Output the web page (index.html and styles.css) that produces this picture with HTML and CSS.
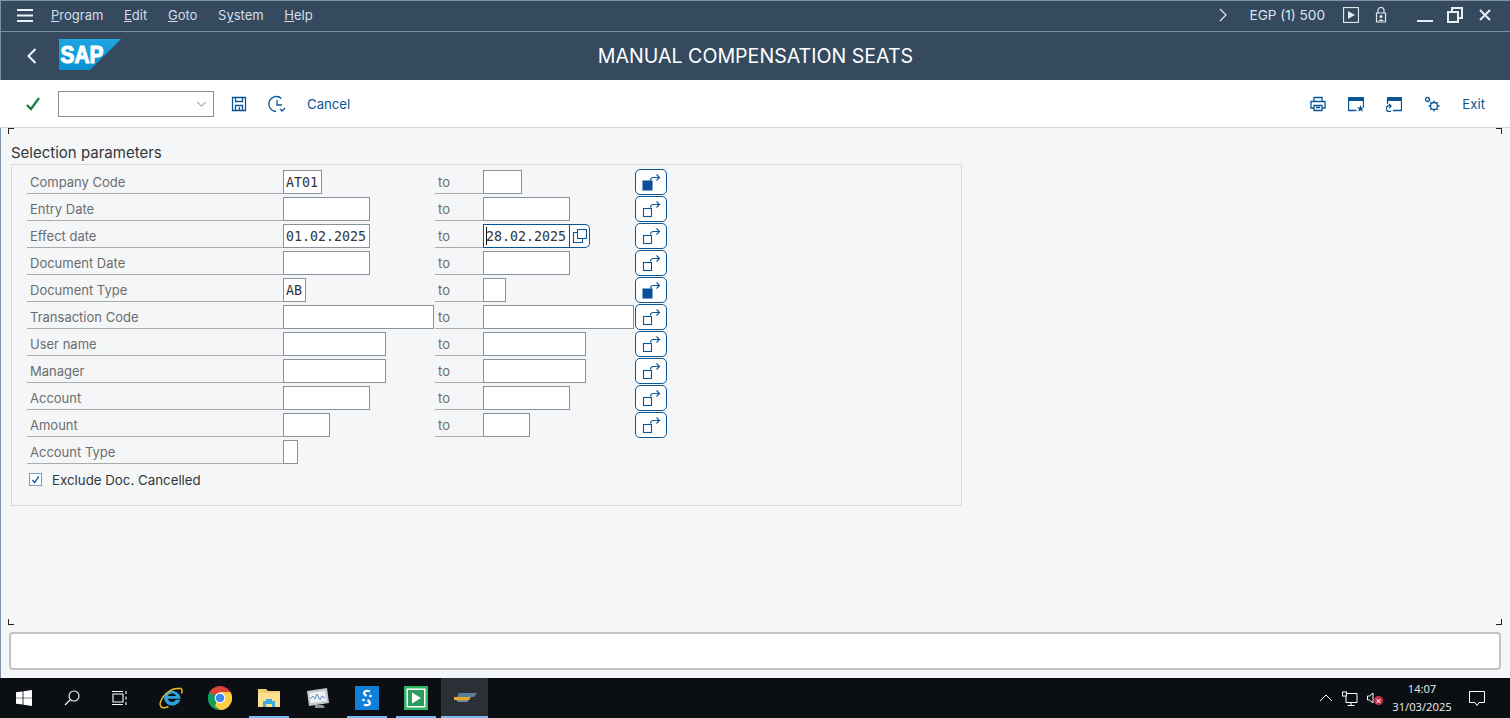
FILE: index.html
```html
<!DOCTYPE html>
<html lang="en">
<head>
<meta charset="utf-8">
<title>Manual Compensation Seats</title>
<link rel="stylesheet" href="styles.css">
</head>
<body>
<div class="window">
  <header class="shell">
    <div class="menubar">
      <svg class="ico hamburger" viewBox="0 0 16 13"><path d="M0 1h16M0 6.500h16M0 12h16"/></svg>
      <nav class="menus">
        <span><u>P</u>rogram</span><span><u>E</u>dit</span><span><u>G</u>oto</span><span>S<u>y</u>stem</span><span><u>H</u>elp</span>
      </nav>
      <div class="sysinfo">
        <svg class="ico chev" viewBox="0 0 8 14"><path d="M1 1l6 6-6 6"/></svg>
        <span class="sysname">EGP (1) 500</span>
        <svg class="ico play" viewBox="0 0 16 16"><rect x="0.500" y="0.500" width="15" height="15"/><path class="fill" d="M5 4l7 4-7 4z"/></svg>
        <svg class="ico lock" viewBox="0 0 12 16"><path d="M3 6V3.500a3 3 0 0 1 6 0V6M1.500 6h9v9h-9z"/><circle class="fill" cx="6" cy="9.500" r="1.500"/><path class="fill" d="M3.500 14c0-2 5-2 5 0z"/></svg>
        <div class="winbtns">
          <svg class="ico" viewBox="0 0 16 16"><path class="thick" d="M0 14h16"/></svg>
          <svg class="ico" viewBox="0 0 16 16"><path class="thick" d="M1 5h10v10H1zM5 5V1h10v10h-4"/></svg>
          <svg class="ico" viewBox="0 0 16 16"><path class="thick" d="M3 3l10 10M13 3L3 13"/></svg>
        </div>
      </div>
    </div>
    <div class="titlebar">
      <div class="title-left">
        <svg class="ico back" viewBox="0 0 10 16"><path d="M8.500 1L1.500 8l7 7"/></svg>
        <svg class="logo" viewBox="0 0 62 31">
          <defs><linearGradient id="sapg" x1="0" y1="0" x2="0" y2="1"><stop offset="0" stop-color="#1ea7e2"/><stop offset="1" stop-color="#0a8fd4"/></linearGradient></defs>
          <path d="M0 0h62L31 31H0z" fill="url(#sapg)"/>
          <text x="1.500" y="24" class="logotext" textLength="43" lengthAdjust="spacingAndGlyphs">SAP</text>
        </svg>
      </div>
      <h1 class="title">MANUAL COMPENSATION SEATS</h1>
      <div></div>
    </div>
  </header>

  <div class="toolbar">
    <svg class="tb-check" viewBox="0 0 14 14"><path d="M1 8l4 4 8-11"/></svg>
    <div class="cmd">
      <svg class="cmd-arrow" viewBox="0 0 12 7"><path d="M1 1l5 5 5-5"/></svg>
    </div>
    <svg class="tbi save" viewBox="0 0 16 16"><path d="M1.500 1.500h13v13h-13zM4.500 1.500v4h7v-4M4.500 14.500v-5h7v5M8.500 11v3"/></svg>
    <svg class="tbi hist" viewBox="0 0 18 18"><path d="M13.500 3.500A7.500 7.500 0 1 0 8 16.500M9 5v5h5M12 14l2 2 3-3"/></svg>
    <span class="tb-text cancel">Cancel</span>
    <div class="tb-right">
      <svg class="tbi" viewBox="0 0 16 16"><path d="M4 5V1.500h8V5M4 12H1V5.500h14V12h-3M4 9.500h8v5H4zM6 11.500h4"/></svg>
      <svg class="tbi" viewBox="0 0 16 16"><path class="solid" d="M0 1h16v4H0z"/><path d="M.5 3v11.500h8M15.500 3v8"/><path class="solid" d="M12.500 9l1 2.500h2.500l-2 1.600.8 2.600-2.300-1.500-2.300 1.500.8-2.600-2-1.600h2.500z"/></svg>
      <svg class="tbi" viewBox="0 0 16 16"><path class="solid" d="M1 1h15v4H1z"/><path d="M1.500 3v5M15.500 3v11.500H7M5 10a3 3 0 1 0 0 5M3 8l2 2-2 2"/></svg>
      <svg class="tbi" viewBox="0 0 16 16"><circle cx="10" cy="10" r="3.500"/><path d="M10 4.500v2M10 13.500v2M4.500 10h2M13.500 10h2M6.200 6.200l1.300 1.300M12.500 12.500l1.300 1.300M13.800 6.200l-1.300 1.300M7.500 12.500l-1.300 1.300"/><circle cx="3.500" cy="3.500" r="2"/></svg>
      <span class="tb-text">Exit</span>
    </div>
  </div>

  <main class="content">
    <i class="crop tl"></i><i class="crop tr"></i><i class="crop bl"></i><i class="crop br"></i>
    <h2 class="grouptitle">Selection parameters</h2>
    <section class="groupbox">
      <div class="form">
        <div class="row">
          <label class="lbl">Company Code</label>
          <div class="cell"><div class="field w39">AT01</div></div>
          <span class="to">to</span>
          <div class="cell"><div class="field w39"></div></div>
          <button class="multi on"><svg viewBox="1 1 30 24"><rect class="sq" x="8" y="12" width="9" height="9"/><path d="M15.500 11.500c0-2 1-3 3-3h6M21.500 5.500l3 3-3 3"/></svg></button>
        </div>
        <div class="row">
          <label class="lbl">Entry Date</label>
          <div class="cell"><div class="field w87"></div></div>
          <span class="to">to</span>
          <div class="cell"><div class="field w87"></div></div>
          <button class="multi"><svg viewBox="1 1 30 24"><rect x="8.500" y="12.500" width="8" height="8"/><path d="M15.500 11.500c0-2 1-3 3-3h6M21.500 5.500l3 3-3 3"/></svg></button>
        </div>
        <div class="row">
          <label class="lbl">Effect date</label>
          <div class="cell"><div class="field w87">01.02.2025</div></div>
          <span class="to">to</span>
          <div class="cell">
            <div class="field w87 focus"><i class="caret"></i>28.02.2025</div>
            <div class="f4"><svg viewBox="0 0 16 16"><path d="M5.500 4.500H1.500v10h9v-4M5.500 1.500h9v9h-9z"/></svg></div>
          </div>
          <button class="multi"><svg viewBox="1 1 30 24"><rect x="8.500" y="12.500" width="8" height="8"/><path d="M15.500 11.500c0-2 1-3 3-3h6M21.500 5.500l3 3-3 3"/></svg></button>
        </div>
        <div class="row">
          <label class="lbl">Document Date</label>
          <div class="cell"><div class="field w87"></div></div>
          <span class="to">to</span>
          <div class="cell"><div class="field w87"></div></div>
          <button class="multi"><svg viewBox="1 1 30 24"><rect x="8.500" y="12.500" width="8" height="8"/><path d="M15.500 11.500c0-2 1-3 3-3h6M21.500 5.500l3 3-3 3"/></svg></button>
        </div>
        <div class="row">
          <label class="lbl">Document Type</label>
          <div class="cell"><div class="field w23">AB</div></div>
          <span class="to">to</span>
          <div class="cell"><div class="field w23"></div></div>
          <button class="multi on"><svg viewBox="1 1 30 24"><rect class="sq" x="8" y="12" width="9" height="9"/><path d="M15.500 11.500c0-2 1-3 3-3h6M21.500 5.500l3 3-3 3"/></svg></button>
        </div>
        <div class="row">
          <label class="lbl">Transaction Code</label>
          <div class="cell"><div class="field w151"></div></div>
          <span class="to">to</span>
          <div class="cell"><div class="field w151"></div></div>
          <button class="multi"><svg viewBox="1 1 30 24"><rect x="8.500" y="12.500" width="8" height="8"/><path d="M15.500 11.500c0-2 1-3 3-3h6M21.500 5.500l3 3-3 3"/></svg></button>
        </div>
        <div class="row">
          <label class="lbl">User name</label>
          <div class="cell"><div class="field w103"></div></div>
          <span class="to">to</span>
          <div class="cell"><div class="field w103"></div></div>
          <button class="multi"><svg viewBox="1 1 30 24"><rect x="8.500" y="12.500" width="8" height="8"/><path d="M15.500 11.500c0-2 1-3 3-3h6M21.500 5.500l3 3-3 3"/></svg></button>
        </div>
        <div class="row">
          <label class="lbl">Manager</label>
          <div class="cell"><div class="field w103"></div></div>
          <span class="to">to</span>
          <div class="cell"><div class="field w103"></div></div>
          <button class="multi"><svg viewBox="1 1 30 24"><rect x="8.500" y="12.500" width="8" height="8"/><path d="M15.500 11.500c0-2 1-3 3-3h6M21.500 5.500l3 3-3 3"/></svg></button>
        </div>
        <div class="row">
          <label class="lbl">Account</label>
          <div class="cell"><div class="field w87"></div></div>
          <span class="to">to</span>
          <div class="cell"><div class="field w87"></div></div>
          <button class="multi"><svg viewBox="1 1 30 24"><rect x="8.500" y="12.500" width="8" height="8"/><path d="M15.500 11.500c0-2 1-3 3-3h6M21.500 5.500l3 3-3 3"/></svg></button>
        </div>
        <div class="row">
          <label class="lbl">Amount</label>
          <div class="cell"><div class="field w47"></div></div>
          <span class="to">to</span>
          <div class="cell"><div class="field w47"></div></div>
          <button class="multi"><svg viewBox="1 1 30 24"><rect x="8.500" y="12.500" width="8" height="8"/><path d="M15.500 11.500c0-2 1-3 3-3h6M21.500 5.500l3 3-3 3"/></svg></button>
        </div>
        <div class="row">
          <label class="lbl">Account Type</label>
          <div class="cell"><div class="field w15"></div></div>
        </div>
        <div class="checkrow">
          <span class="checkbox"><svg viewBox="0 0 10 10"><path d="M1.500 5.500l2.500 3 4.500-7"/></svg></span>
          <span class="checklabel">Exclude Doc. Cancelled</span>
        </div>
      </div>
    </section>
  </main>

  <div class="statuswrap"><div class="statusbar"></div></div>

  <footer class="taskbar">
    <div class="tk-left">
      <div class="tk w48"><svg class="tk-ico" viewBox="0 0 16 16"><path class="wh" d="M0 2.300l6.600-.9v6.300H0zM7.400 1.300L16 0v7.700H7.400zM0 8.300h6.600v6.300L0 13.700zM7.400 8.300H16V16l-8.600-1.200z"/></svg></div>
      <div class="tk w48"><svg class="tk-ico" viewBox="0 0 16 16"><circle class="ln" cx="10" cy="6" r="5"/><path class="ln" d="M6.500 9.500L1 15"/></svg></div>
      <div class="tk w48"><svg class="tk-ico" viewBox="0 0 16 16"><path class="ln" d="M1 4h10v8H1zM0 1.500h11M0 14.500h11M14 1v3M14 6.500v3M14 12v3"/></svg></div>
      <div class="tk w49 first"><svg class="tk-big" viewBox="0 0 24 24"><path d="M21.500 12.800H9c.2 3.500 5.500 4.500 8 1h4.300c-2.500 7.500-14 8-16-.5C4 6.500 12 2 18 6.500c2 1.500 3.500 3.800 3.500 6.300zM9 10h8c-.5-3.500-7.500-3.500-8 0z" fill="#2ba3de" fill-rule="evenodd"/><path d="M20 3C15 .5 4 8 1.500 16c-1.500 5 2 7.500 8 4.500M19 2.500c3-1 5 .5 3.500 5" fill="none" stroke="#e8b92c" stroke-width="1.500"/></svg></div>
      <div class="tk w49"><svg class="tk-big" viewBox="0 0 24 24"><circle cx="12" cy="12" r="12" fill="#db4437"/><path d="M12 12L1.600 6a12 12 0 0 0 5 16.900L12 24z" fill="#0f9d58"/><path d="M12 6h10.400A12 12 0 0 1 12 24l-5-4z" fill="#ffcd40"/><circle cx="12" cy="12" r="5.400" fill="#fff"/><circle cx="12" cy="12" r="4.300" fill="#4285f4"/></svg></div>
      <div class="tk w49 run"><svg class="tk-big" viewBox="0 0 24 24"><path d="M1 3h8l2 2h12v16H1z" fill="#f0cf72"/><path d="M1 7h22v14H1z" fill="#fbe08f"/><path d="M6 21v-6h3v-2h6v2h3v6h-3v-3H9v3z" fill="#3fa9dc"/></svg></div>
      <div class="tk w49"><svg class="tk-big" viewBox="0 0 24 24"><path d="M1 5l20-3 2 15-20 3z" fill="#c5c9cd"/><path d="M3 7l16-2 1.500 10-16 2z" fill="#eef1f3"/><path d="M4 13l3-3 2 3 2-5 3 6 2-4 3 2" fill="none" stroke="#5d8fbf"/><path d="M9 19h8l2 3H9z" fill="#8f9497"/></svg></div>
      <div class="tk w49 run"><svg class="tk-big" viewBox="0 0 24 24"><rect width="24" height="24" fill="#0f7fd8"/><path d="M15 5.500c-3-1.500-6-.5-6 1.500 0 1 1 2 2.500 3M9 18.500c3 1.500 6 .5 6-1.500 0-1-1-2-2.500-3" fill="none" stroke="#fff" stroke-width="2.200"/><circle cx="15.500" cy="10" r="1.300" fill="#fff"/><circle cx="8.500" cy="14" r="1.300" fill="#fff"/></svg></div>
      <div class="tk w49 run"><svg class="tk-big" viewBox="0 0 24 24"><rect width="24" height="24" fill="#2db668"/><rect x="2.500" y="2.500" width="19" height="19" fill="#fff"/><rect x="4" y="4" width="16" height="16" fill="#2a9d5c"/><path d="M8 6.500l9 5.500-9 5.500z" fill="#fff"/></svg></div>
      <div class="tk w47 run active"><svg class="tk-big" viewBox="0 0 24 24"><path d="M6 7h18l-3 4H4z" fill="#5c7e9b"/><path d="M1 11h17l-2 3H1z" fill="#e8a727"/><path d="M3 14h13l-2 2H5z" fill="#7c8a94"/></svg></div>
    </div>
    <div class="tk-right">
      <svg class="tray up" viewBox="0 0 14 8"><path d="M1 7l6-6 6 6"/></svg>
      <svg class="tray net" viewBox="0 0 16 15"><path d="M4 2.500h11v9H4M4 5v6.500M9 11.500V14M5.500 14.500h7"/><rect class="sm" x=".5" y="1" width="4" height="4"/></svg>
      <span class="vol">
        <svg class="tray spk" viewBox="0 0 7 12"><path d="M.5 4h2L6 1v10L2.500 8h-2z"/></svg>
        <i class="mute">×</i>
      </span>
      <div class="clock"><span>14:07</span><span>31/03/2025</span></div>
      <svg class="tray note" viewBox="0 0 16 15"><path d="M.5.500h15v11H10l-2 3-2-3H.5z"/></svg>
    </div>
  </footer>
</div>
</body>
</html>
```
FILE: styles.css
```css
* { box-sizing: border-box; }
html, body { margin: 0; height: 100%; overflow: hidden; }
body { font-family: Inter, "Noto Sans", sans-serif; font-size: 13px; }
.window { height: 718px; display: flex; flex-direction: column; background: #f5f6f7; }
.ico { fill: none; stroke: #dfe7ef; stroke-width: 1.2; display: block; }
.ico .fill { fill: #dfe7ef; stroke: none; }
.ico .thick { stroke-width: 2; stroke: #e8edf2; }

/* shell */
.shell { background: #354a5f; color: #d8e2ec; border-top: 1px solid #7f93a8; border-left: 1px solid #7f93a8; }
.menubar { height: 31px; display: flex; align-items: center; border-bottom: 1px solid #7d8fa2; padding: 0 0 2px 16px; }
.hamburger { width: 16px; height: 13px; stroke-width: 1.8; stroke: #eef2f6; }
.menus { display: flex; gap: 20.7px; margin-left: 18px; font-size: 13px; color: #d4dfe9; }
.sysinfo { margin-left: auto; display: flex; align-items: center; }
.chev { width: 8px; height: 14px; }
.sysname { margin-left: 22px; color: #dce5ee; font-size: 13.6px; }
.play { width: 16px; height: 16px; margin-left: 18px; }
.lock { width: 12px; height: 16px; margin-left: 16px; }
.winbtns { display: flex; gap: 14px; margin-left: 30px; margin-right: 17px; }
.winbtns svg { width: 16px; height: 16px; }
.titlebar { height: 48px; display: grid; grid-template-columns: 1fr auto 1fr; align-items: center; }
.title-left { display: flex; align-items: center; padding-left: 26px; }
.back { width: 10px; height: 16px; stroke-width: 2; stroke: #f2f5f8; }
.logo { width: 62px; height: 31px; margin-left: 22px; margin-top: -3px; display: block; }
.logotext { font-family: "Liberation Sans", sans-serif; font-weight: 700; font-size: 24px; fill: #fff; stroke: #fff; stroke-width: 1.1; }
.title { margin: 0; font-size: 19.6px; font-weight: 400; color: #fff; }

/* toolbar */
.toolbar { height: 48px; background: #fff; border-bottom: 1px solid #d5dadd; display: flex; align-items: center; padding-left: 26px; }
.tb-check { width: 14px; height: 14px; fill: none; stroke: #107e3e; stroke-width: 2.2; }
.cmd { width: 156px; height: 26px; margin-left: 18px; border: 1px solid #89919a; background: #fff; display: flex; align-items: center; justify-content: flex-end; padding-right: 6px; }
.cmd-arrow { width: 11px; height: 6px; fill: none; stroke: #5f7f9f; stroke-width: 1.1; }
.tbi { width: 16px; height: 16px; fill: none; stroke: #0a5596; stroke-width: 1.3; display: block; }
.tbi .solid { fill: #0a5596; stroke: none; }
.save { margin-left: 17px; }
.hist { width: 18px; height: 18px; margin-left: 21px; }
.tb-text { color: #0a5596; font-size: 13.2px; }
.cancel { margin-left: 21px; }
.tb-right { margin-left: auto; display: flex; align-items: center; gap: 22px; padding-right: 25px; }

/* content */
.content { flex: 1; min-height: 0; position: relative; padding: 0 0 0 11px; border-left: 1px solid #7f93a8; }
.crop { position: absolute; width: 6px; height: 6px; border: 0 solid #222; }
.crop.tl { left: 7px; top: 0; border-width: 1px 0 0 1px; }
.crop.tr { left: 1495px; top: 0; border-width: 1px 1px 0 0; }
.crop.bl { left: 7px; bottom: 7px; border-width: 0 0 1px 1px; }
.crop.br { left: 1495px; bottom: 7px; border-width: 0 1px 1px 0; }
.grouptitle { margin: 0 0 0 -1px; height: 36px; padding-top: 16px; font-size: 15px; line-height: 18px; font-weight: 400; color: #32363a; }
.groupbox { width: 951px; height: 342px; margin-left: -1px; border: 1px solid #d9d9d9; padding: 4px 0 0 15px; }
.row { display: grid; grid-template-columns: 256px 152px 48px 152px 32px; height: 27px; align-items: stretch; }
.lbl { color: #6a6d70; padding-left: 3px; border-bottom: 1px solid #a9abae; line-height: 26px; height: 25px; }
.cell { display: flex; align-items: flex-start; }
.to { color: #6a6d70; padding-left: 3px; border-bottom: 1px solid #a9abae; line-height: 26px; height: 25px; }
.field { height: 24px; margin-top: 1px; background: #fff; border: 1px solid #89919a; font-family: "DejaVu Sans Mono", monospace; font-size: 13.3px; line-height: 23px; padding-left: 2px; color: #32363a; position: relative; white-space: nowrap; }
.w15 { width: 15px; } .w23 { width: 23px; } .w39 { width: 39px; } .w47 { width: 47px; } .w87 { width: 87px; } .w103 { width: 103px; } .w151 { width: 151px; }
.field.focus { border-color: #0a5596; }
.caret { position: absolute; left: 2px; top: 2px; width: 1px; height: 18px; background: #111; }
.f4 { width: 20px; height: 24px; margin-top: 1px; border: 1px solid #0a5596; border-left: 0; border-radius: 0 5px 5px 0; background: #fff; display: flex; align-items: center; justify-content: center; }
.f4 svg { width: 16px; height: 16px; fill: none; stroke: #0a5596; stroke-width: 1.1; }
.multi { width: 32px; height: 26px; padding: 0; border: 1px solid #0a5596; border-radius: 5px; background: #fff; display: block; }
.multi svg { width: 30px; height: 24px; display: block; fill: none; stroke: #0a5596; stroke-width: 1.1; }
.multi .sq { fill: #0a4f9c; }
.checkrow { display: flex; align-items: center; height: 27px; padding-left: 2px; }
.checkbox { width: 13px; height: 13px; border: 1px solid #7f9cba; background: #fff; display: flex; align-items: center; justify-content: center; }
.checkbox svg { width: 9px; height: 9px; fill: none; stroke: #0a5596; stroke-width: 1.5; }
.checklabel { margin-left: 10px; color: #32363a; font-size: 13.3px; }

/* status */
.statuswrap { height: 46px; padding: 0 9px 8px 8px; border-left: 1px solid #7f93a8; }
.statusbar { height: 38px; background: #fff; border: 2px solid #bfc3c7; border-radius: 4px; }

/* taskbar */
.taskbar { height: 40px; background: #0b0f14; display: flex; justify-content: space-between; align-items: stretch; color: #fff; }
.tk-left { display: flex; }
.tk { display: flex; align-items: center; justify-content: center; position: relative; }
.w48 { width: 48px; }
.w49 { width: 49px; }
.w47 { width: 47px; }
.first { margin-left: 2px; }
.tk-ico { width: 16px; height: 16px; }
.tk-big { width: 24px; height: 24px; }
.wh { fill: #fff; }
.ln { fill: none; stroke: #fff; stroke-width: 1.1; }
.run::after { content: ""; position: absolute; left: 5px; right: 4px; bottom: 0; height: 2px; background: #76b9ed; }
.active { background: #2b3036; margin-left: 1px; }
.active::after { left: 0; right: 0; }
.tk-right { display: flex; align-items: center; }
.tray { display: block; fill: none; stroke: #fff; stroke-width: 1; }
.up { width: 14px; height: 8px; }
.net { width: 16px; height: 15px; margin-left: 9px; }
.vol { position: relative; display: block; margin-left: 9px; width: 17px; }
.spk { width: 7px; height: 12px; }
.mute { position: absolute; left: 7px; top: 4px; width: 9px; height: 9px; border-radius: 50%; background: #c8304a; color: #fff; font-size: 9px; line-height: 9px; text-align: center; font-style: normal; }
.clock { display: flex; flex-direction: column; align-items: center; width: 60px; margin-left: 8px; font-size: 11.2px; line-height: 18px; color: #f0f0f0; font-family: "Open Sans", sans-serif; }
.note { width: 16px; height: 15px; margin-left: 17px; margin-right: 25px; }
```
